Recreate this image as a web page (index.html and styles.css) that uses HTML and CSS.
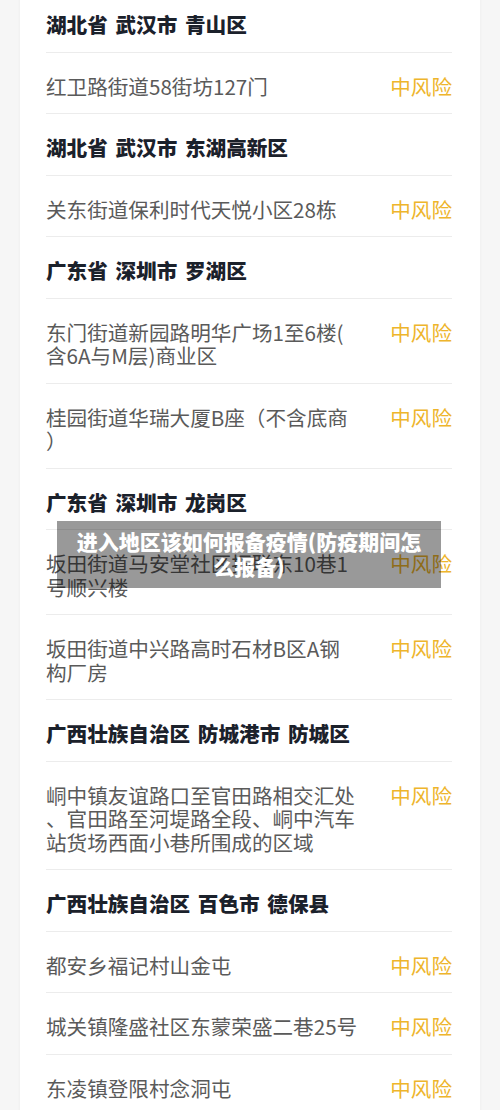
FILE: index.html
```html
<!DOCTYPE html>
<html lang="zh-CN">
<head>
<meta charset="utf-8">
<title>中风险地区</title>
<link rel="stylesheet" href="styles.css">
</head>
<body>
<div class="page">
  <section class="card">
    <div class="row head">湖北省 武汉市 青山区</div>
    <div class="row item"><span class="addr">红卫路街道58街坊127门</span><span class="risk">中风险</span></div>
    <div class="row head">湖北省 武汉市 东湖高新区</div>
    <div class="row item"><span class="addr">关东街道保利时代天悦小区28栋</span><span class="risk">中风险</span></div>
    <div class="row head">广东省 深圳市 罗湖区</div>
    <div class="row item"><span class="addr">东门街道新园路明华广场1至6楼(<br>含6A与M层)商业区</span><span class="risk">中风险</span></div>
    <div class="row item"><span class="addr">桂园街道华瑞大厦B座（不含底商<br>）</span><span class="risk">中风险</span></div>
    <div class="row head">广东省 深圳市 龙岗区</div>
    <div class="row item"><span class="addr">坂田街道马安堂社区振联东10巷1<br>号顺兴楼</span><span class="risk">中风险</span></div>
    <div class="row item"><span class="addr">坂田街道中兴路高时石材B区A钢<br>构厂房</span><span class="risk">中风险</span></div>
    <div class="row head">广西壮族自治区 防城港市 防城区</div>
    <div class="row item"><span class="addr">峒中镇友谊路口至官田路相交汇处<br>、官田路至河堤路全段、峒中汽车<br>站货场西面小巷所围成的区域</span><span class="risk">中风险</span></div>
    <div class="row head">广西壮族自治区 百色市 德保县</div>
    <div class="row item"><span class="addr">都安乡福记村山金屯</span><span class="risk">中风险</span></div>
    <div class="row item"><span class="addr">城关镇隆盛社区东蒙荣盛二巷25号</span><span class="risk">中风险</span></div>
    <div class="row item"><span class="addr">东凌镇登限村念洞屯</span><span class="risk">中风险</span></div>
  </section>
  <div class="caption">进入地区该如何报备疫情(防疫期间怎么报备)</div>
</div>
</body>
</html>
```
FILE: styles.css
```css
html, body {
  margin: 0;
  padding: 0;
}
body {
  background: #f6f6f6;
  font-family: "Noto Sans CJK SC", "Noto Sans", sans-serif;
  height: 1110px;
  overflow: hidden;
}
.page {
  position: relative;
  display: flow-root;
  height: 1110px;
}
.card {
  margin: -9px 0 0 20px;
  width: 460px;
  box-sizing: border-box;
  padding: 0 28px 0 26px;
  background: #ffffff;
  box-shadow: 0 0 3px rgba(0, 0, 0, 0.05);
}
.row {
  display: flex;
  align-items: flex-start;
  padding: 22px 0 15px;
  border-bottom: 1px solid #ececec;
  font-size: 20.6px;
  line-height: 23.5px;
}
.head {
  font-weight: 900;
  color: #1b212b;
  word-spacing: 3px;
}
.addr {
  flex: 0 0 320px;
  color: #5a5a5a;
}
.risk {
  margin-left: auto;
  color: #eeb52c;
  white-space: nowrap;
}
.caption {
  position: absolute;
  left: 57px;
  top: 521px;
  width: 384px;
  height: 67px;
  box-sizing: border-box;
  padding: 8px 12px;
  background: rgba(0, 0, 0, 0.4);
  color: #ffffff;
  font-weight: 900;
  font-size: 21px;
  line-height: 25px;
  text-align: center;
}
```
